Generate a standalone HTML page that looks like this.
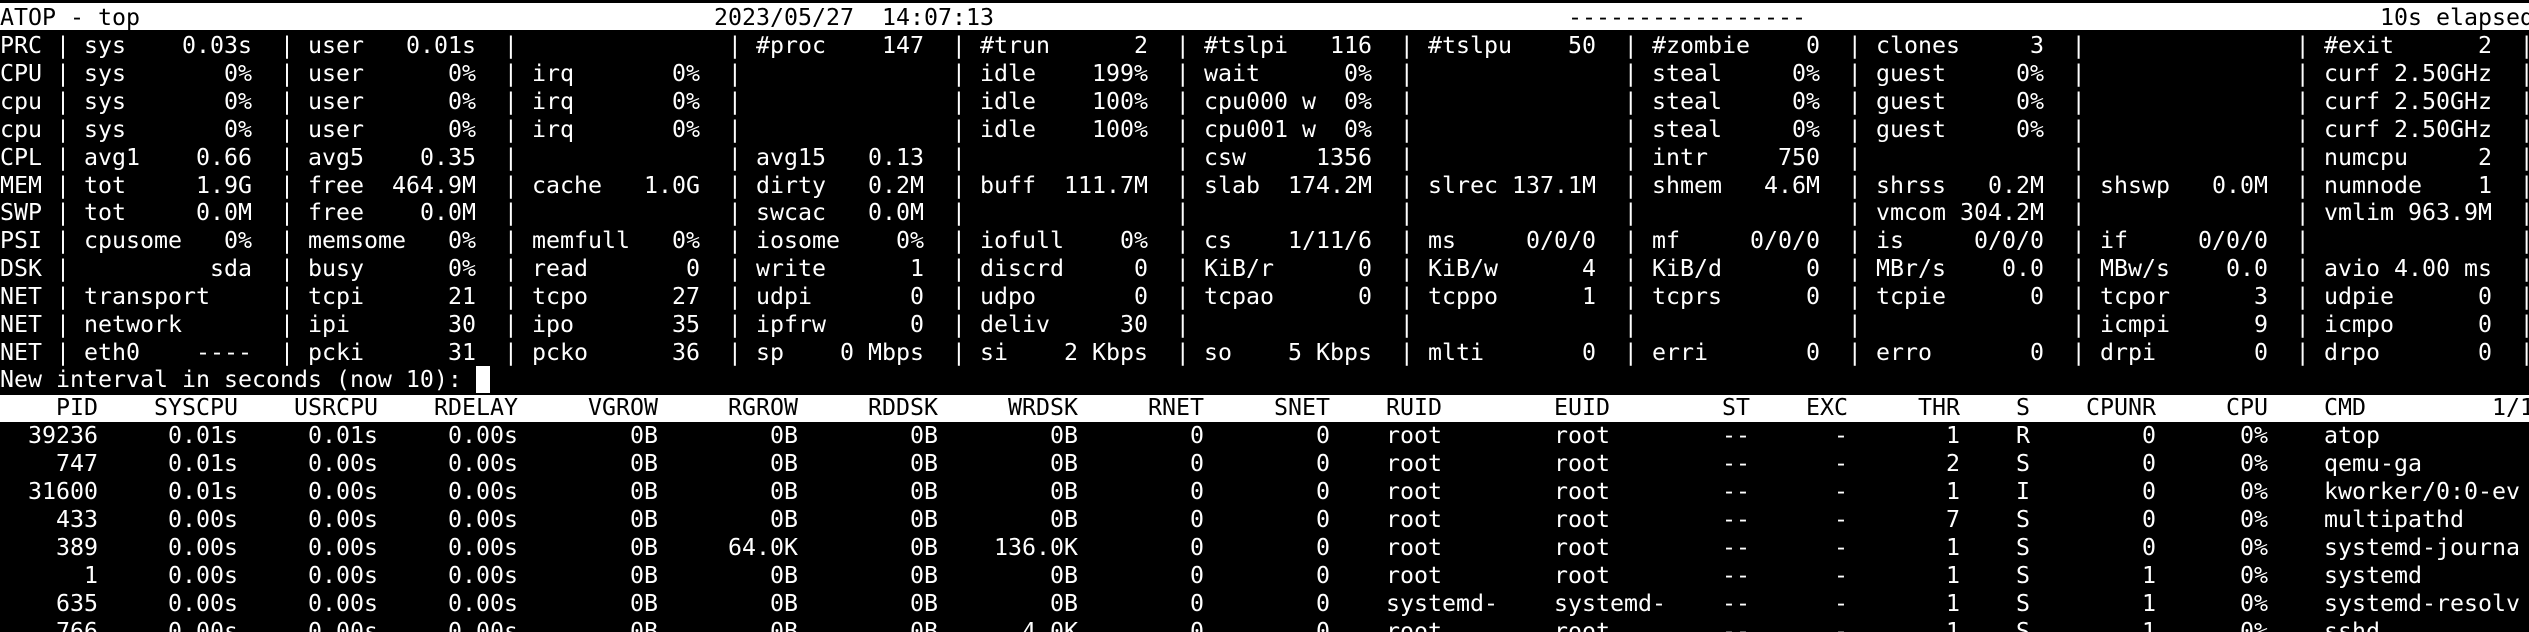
<!DOCTYPE html>
<html><head><meta charset="utf-8"><style>
html,body{margin:0;padding:0;background:#000;overflow:hidden;width:2529px;height:632px}
#w{position:relative;width:2529px;height:632px;overflow:hidden;background:#000;font-family:"DejaVu Sans Mono","Liberation Mono",monospace;font-size:23.25px;color:#fff}
.r{position:absolute;left:0;height:28px;line-height:28px;white-space:pre;width:2529px}
.r i{font-style:normal;position:absolute;top:0;width:168px;display:flex;white-space:pre}
.r i b{font-weight:normal;margin-left:auto}
.r i:nth-of-type(1){left:84px}.r i:nth-of-type(2){left:308px}.r i:nth-of-type(3){left:532px}
.r i:nth-of-type(4){left:756px}.r i:nth-of-type(5){left:980px}.r i:nth-of-type(6){left:1204px}
.r i:nth-of-type(7){left:1428px}.r i:nth-of-type(8){left:1652px}.r i:nth-of-type(9){left:1876px}
.r i:nth-of-type(10){left:2100px}.r i:nth-of-type(11){left:2324px}
.bar{position:absolute;left:0;height:27px;width:2529px;background:#fff}
.blk{color:#000}
.p span{position:absolute;top:0;width:140px;text-align:right}
.p span:nth-of-type(1){left:-42px}.p span:nth-of-type(2){left:98px}.p span:nth-of-type(3){left:238px}
.p span:nth-of-type(4){left:378px}.p span:nth-of-type(5){left:518px}.p span:nth-of-type(6){left:658px}
.p span:nth-of-type(7){left:798px}.p span:nth-of-type(8){left:938px}.p span:nth-of-type(9){left:1064px}
.p span:nth-of-type(10){left:1190px}
.p span:nth-of-type(11){left:1386px;text-align:left;width:200px}
.p span:nth-of-type(12){left:1554px;text-align:left;width:200px}
.p span:nth-of-type(13){left:1610px}.p span:nth-of-type(14){left:1708px}.p span:nth-of-type(15){left:1820px}
.p span:nth-of-type(16){left:2016px;text-align:left;width:20px}
.p span:nth-of-type(17){left:2016px}.p span:nth-of-type(18){left:2128px}
.p span:nth-of-type(19){left:2324px;text-align:left;width:300px}
.p span:nth-of-type(20){left:2492px;text-align:left;width:100px}
.a{position:absolute;top:0}
</style></head><body><div id="w">
<div class="bar" style="top:3px"></div>
<div class="r blk" style="top:4px"><span class="a" style="left:0">ATOP - top</span><span class="a" style="left:714px">2023/05/27  14:07:13</span><span class="a" style="left:1568px">-----------------</span><span class="a" style="left:2380px">10s elapsed</span></div>

<div class="r" style="top:32px"><span class="a" style="left:0">PRC |               |               |               |               |               |               |               |               |               |               |               |</span><i>sys<b>0.03s</b></i><i>user<b>0.01s</b></i><i></i><i>#proc<b>147</b></i><i>#trun<b>2</b></i><i>#tslpi<b>116</b></i><i>#tslpu<b>50</b></i><i>#zombie<b>0</b></i><i>clones<b>3</b></i><i></i><i>#exit<b>2</b></i></div>

<div class="r" style="top:60px"><span class="a" style="left:0">CPU |               |               |               |               |               |               |               |               |               |               |               |</span><i>sys<b>0%</b></i><i>user<b>0%</b></i><i>irq<b>0%</b></i><i></i><i>idle<b>199%</b></i><i>wait<b>0%</b></i><i></i><i>steal<b>0%</b></i><i>guest<b>0%</b></i><i></i><i>curf<b>2.50GHz</b></i></div>

<div class="r" style="top:88px"><span class="a" style="left:0">cpu |               |               |               |               |               |               |               |               |               |               |               |</span><i>sys<b>0%</b></i><i>user<b>0%</b></i><i>irq<b>0%</b></i><i></i><i>idle<b>100%</b></i><i>cpu000 w<b>0%</b></i><i></i><i>steal<b>0%</b></i><i>guest<b>0%</b></i><i></i><i>curf<b>2.50GHz</b></i></div>

<div class="r" style="top:116px"><span class="a" style="left:0">cpu |               |               |               |               |               |               |               |               |               |               |               |</span><i>sys<b>0%</b></i><i>user<b>0%</b></i><i>irq<b>0%</b></i><i></i><i>idle<b>100%</b></i><i>cpu001 w<b>0%</b></i><i></i><i>steal<b>0%</b></i><i>guest<b>0%</b></i><i></i><i>curf<b>2.50GHz</b></i></div>

<div class="r" style="top:144px"><span class="a" style="left:0">CPL |               |               |               |               |               |               |               |               |               |               |               |</span><i>avg1<b>0.66</b></i><i>avg5<b>0.35</b></i><i></i><i>avg15<b>0.13</b></i><i></i><i>csw<b>1356</b></i><i></i><i>intr<b>750</b></i><i></i><i></i><i>numcpu<b>2</b></i></div>

<div class="r" style="top:172px"><span class="a" style="left:0">MEM |               |               |               |               |               |               |               |               |               |               |               |</span><i>tot<b>1.9G</b></i><i>free<b>464.9M</b></i><i>cache<b>1.0G</b></i><i>dirty<b>0.2M</b></i><i>buff<b>111.7M</b></i><i>slab<b>174.2M</b></i><i>slrec<b>137.1M</b></i><i>shmem<b>4.6M</b></i><i>shrss<b>0.2M</b></i><i>shswp<b>0.0M</b></i><i>numnode<b>1</b></i></div>

<div class="r" style="top:199px"><span class="a" style="left:0">SWP |               |               |               |               |               |               |               |               |               |               |               |</span><i>tot<b>0.0M</b></i><i>free<b>0.0M</b></i><i></i><i>swcac<b>0.0M</b></i><i></i><i></i><i></i><i></i><i>vmcom<b>304.2M</b></i><i></i><i>vmlim<b>963.9M</b></i></div>

<div class="r" style="top:227px"><span class="a" style="left:0">PSI |               |               |               |               |               |               |               |               |               |               |               |</span><i>cpusome<b>0%</b></i><i>memsome<b>0%</b></i><i>memfull<b>0%</b></i><i>iosome<b>0%</b></i><i>iofull<b>0%</b></i><i>cs<b>1/11/6</b></i><i>ms<b>0/0/0</b></i><i>mf<b>0/0/0</b></i><i>is<b>0/0/0</b></i><i>if<b>0/0/0</b></i><i></i></div>

<div class="r" style="top:255px"><span class="a" style="left:0">DSK |               |               |               |               |               |               |               |               |               |               |               |</span><i><b>sda</b></i><i>busy<b>0%</b></i><i>read<b>0</b></i><i>write<b>1</b></i><i>discrd<b>0</b></i><i>KiB/r<b>0</b></i><i>KiB/w<b>4</b></i><i>KiB/d<b>0</b></i><i>MBr/s<b>0.0</b></i><i>MBw/s<b>0.0</b></i><i>avio<b>4.00 ms</b></i></div>

<div class="r" style="top:283px"><span class="a" style="left:0">NET |               |               |               |               |               |               |               |               |               |               |               |</span><i>transport</i><i>tcpi<b>21</b></i><i>tcpo<b>27</b></i><i>udpi<b>0</b></i><i>udpo<b>0</b></i><i>tcpao<b>0</b></i><i>tcppo<b>1</b></i><i>tcprs<b>0</b></i><i>tcpie<b>0</b></i><i>tcpor<b>3</b></i><i>udpie<b>0</b></i></div>

<div class="r" style="top:311px"><span class="a" style="left:0">NET |               |               |               |               |               |               |               |               |               |               |               |</span><i>network</i><i>ipi<b>30</b></i><i>ipo<b>35</b></i><i>ipfrw<b>0</b></i><i>deliv<b>30</b></i><i></i><i></i><i></i><i></i><i>icmpi<b>9</b></i><i>icmpo<b>0</b></i></div>

<div class="r" style="top:339px"><span class="a" style="left:0">NET |               |               |               |               |               |               |               |               |               |               |               |</span><i>eth0<b>----</b></i><i>pcki<b>31</b></i><i>pcko<b>36</b></i><i>sp<b>0 Mbps</b></i><i>si<b>2 Kbps</b></i><i>so<b>5 Kbps</b></i><i>mlti<b>0</b></i><i>erri<b>0</b></i><i>erro<b>0</b></i><i>drpi<b>0</b></i><i>drpo<b>0</b></i></div>

<div class="r" style="top:366px"><span class="a" style="left:0">New interval in seconds (now 10): </span></div>
<div style="position:absolute;left:476px;top:366px;width:14px;height:27px;background:#fff"></div>

<div class="bar" style="top:395px"></div>
<div class="r p blk" style="top:394px"><span>PID</span><span>SYSCPU</span><span>USRCPU</span><span>RDELAY</span><span>VGROW</span><span>RGROW</span><span>RDDSK</span><span>WRDSK</span><span>RNET</span><span>SNET</span><span>RUID</span><span>EUID</span><span>ST</span><span>EXC</span><span>THR</span><span>S</span><span>CPUNR</span><span>CPU</span><span>CMD</span><span>1/1</span></div>

<div class="r p" style="top:422px"><span>39236</span><span>0.01s</span><span>0.01s</span><span>0.00s</span><span>0B</span><span>0B</span><span>0B</span><span>0B</span><span>0</span><span>0</span><span>root</span><span>root</span><span>--</span><span>-</span><span>1</span><span>R</span><span>0</span><span>0%</span><span>atop</span></div>
<div class="r p" style="top:450px"><span>747</span><span>0.01s</span><span>0.00s</span><span>0.00s</span><span>0B</span><span>0B</span><span>0B</span><span>0B</span><span>0</span><span>0</span><span>root</span><span>root</span><span>--</span><span>-</span><span>2</span><span>S</span><span>0</span><span>0%</span><span>qemu-ga</span></div>
<div class="r p" style="top:478px"><span>31600</span><span>0.01s</span><span>0.00s</span><span>0.00s</span><span>0B</span><span>0B</span><span>0B</span><span>0B</span><span>0</span><span>0</span><span>root</span><span>root</span><span>--</span><span>-</span><span>1</span><span>I</span><span>0</span><span>0%</span><span>kworker/0:0-ev</span></div>
<div class="r p" style="top:506px"><span>433</span><span>0.00s</span><span>0.00s</span><span>0.00s</span><span>0B</span><span>0B</span><span>0B</span><span>0B</span><span>0</span><span>0</span><span>root</span><span>root</span><span>--</span><span>-</span><span>7</span><span>S</span><span>0</span><span>0%</span><span>multipathd</span></div>
<div class="r p" style="top:534px"><span>389</span><span>0.00s</span><span>0.00s</span><span>0.00s</span><span>0B</span><span>64.0K</span><span>0B</span><span>136.0K</span><span>0</span><span>0</span><span>root</span><span>root</span><span>--</span><span>-</span><span>1</span><span>S</span><span>0</span><span>0%</span><span>systemd-journa</span></div>
<div class="r p" style="top:562px"><span>1</span><span>0.00s</span><span>0.00s</span><span>0.00s</span><span>0B</span><span>0B</span><span>0B</span><span>0B</span><span>0</span><span>0</span><span>root</span><span>root</span><span>--</span><span>-</span><span>1</span><span>S</span><span>1</span><span>0%</span><span>systemd</span></div>
<div class="r p" style="top:590px"><span>635</span><span>0.00s</span><span>0.00s</span><span>0.00s</span><span>0B</span><span>0B</span><span>0B</span><span>0B</span><span>0</span><span>0</span><span>systemd-</span><span>systemd-</span><span>--</span><span>-</span><span>1</span><span>S</span><span>1</span><span>0%</span><span>systemd-resolv</span></div>
<div class="r p" style="top:618px"><span>766</span><span>0.00s</span><span>0.00s</span><span>0.00s</span><span>0B</span><span>0B</span><span>0B</span><span>4.0K</span><span>0</span><span>0</span><span>root</span><span>root</span><span>--</span><span>-</span><span>1</span><span>S</span><span>1</span><span>0%</span><span>sshd</span></div>
</div></body></html>
